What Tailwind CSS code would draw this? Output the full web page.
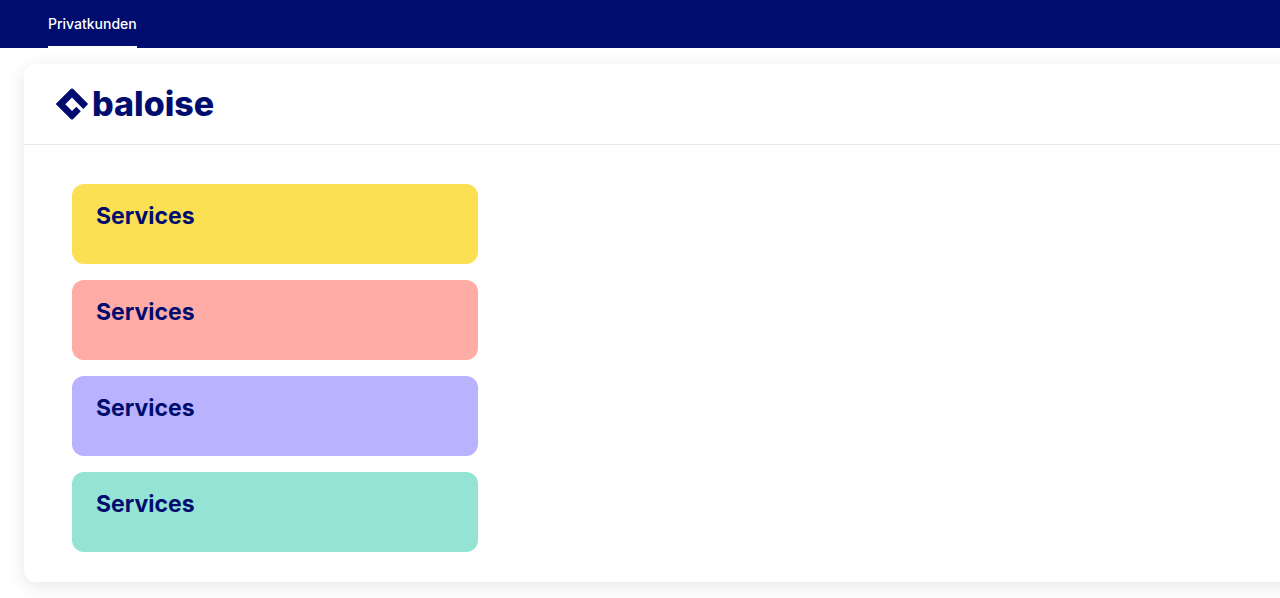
<!DOCTYPE html>
<html lang="de">
<head>
<meta charset="utf-8">
<meta name="viewport" content="width=device-width, initial-scale=1">
<title>Baloise</title>
<script src="https://cdn.jsdelivr.net/npm/@tailwindcss/browser@4"></script>
</head>
<body class="min-h-screen overflow-x-hidden bg-white font-[Inter,sans-serif] text-[#000d6e]">
<header class="flex h-12 bg-[#000d6e] px-12">
  <nav class="flex">
    <a href="#" class="flex items-center border-b-2 border-white pt-0.5 text-sm font-medium text-white">Privatkunden</a>
  </nav>
</header>
<main class="mt-4 -mr-6 ml-6 rounded-xl bg-white pb-[30px] shadow-[0_4px_20px_rgba(0,0,0,0.1)]">
  <div class="flex h-[81px] items-center border-b border-[#e8e8e8] px-8">
    <a href="#" class="flex items-center gap-1" aria-label="baloise">
      <svg class="size-8" viewBox="0 0 32 32" fill="#000d6e" aria-hidden="true"><path d="M15 .8Q16 0 17 .8L31.700 15.500Q32 16 31.700 16.500L27.300 20.900 16 9.600 9.300 16.300 16 23 20.300 18.700 24.800 23.200 17 31.200Q16 32 15 31.200L.4 16.800Q-.2 16 .4 15.300Z"/></svg>
      <span class="text-[34px] leading-8 font-extrabold">baloise</span>
    </a>
  </div>
  <div class="flex w-[454px] flex-col gap-4 pt-[39px] pl-12">
    <section class="h-20 rounded-xl bg-[#fae052] px-6 py-4"><h2 class="text-[23px] leading-8 font-bold">Services</h2></section>
    <section class="h-20 rounded-xl bg-[#ffaca6] px-6 py-4"><h2 class="text-[23px] leading-8 font-bold">Services</h2></section>
    <section class="h-20 rounded-xl bg-[#b8b2ff] px-6 py-4"><h2 class="text-[23px] leading-8 font-bold">Services</h2></section>
    <section class="h-20 rounded-xl bg-[#94e3d4] px-6 py-4"><h2 class="text-[23px] leading-8 font-bold">Services</h2></section>
  </div>
</main>
</body>
</html>
